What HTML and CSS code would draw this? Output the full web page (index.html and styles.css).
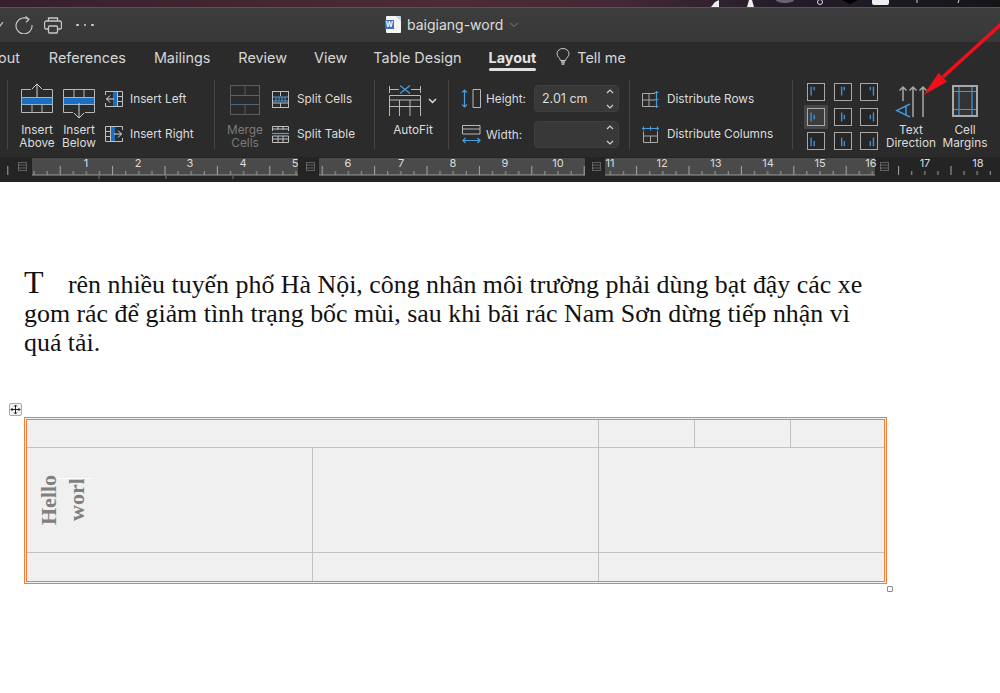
FILE: index.html
```html
<!DOCTYPE html>
<html lang="en">
<head>
    <meta charset="UTF-8">
    <meta name="viewport" content="width=device-width, initial-scale=1.0">
    <title>baigiang-word</title>
    <link rel="stylesheet" href="styles.css">
</head>
<body>

<div class="desktop-strip">
    <svg width="1000" height="7" viewBox="0 0 1000 7">
        <path d="M711 7l4-5 4-2v7z" fill="#eee"/>
        <path d="M747 7l2-7h3l2 7z" fill="#eee"/>
        <ellipse cx="785" cy="0" rx="9" ry="3" fill="#6a6470"/>
        <circle cx="820" cy="2" r="2.5" fill="none" stroke="#ddd"/>
        <path d="M842 0h16l-8 4z" fill="#000"/>
        <rect x="872" y="-5" width="17" height="10" rx="2" fill="#eee"/>
        <path d="M917 0v3M959 0l-1 3" stroke="#ccc"/>
    </svg>
</div>

<div class="titlebar">
    <div class="quick-tools">
        <svg class="qt-chev" width="4" height="8" viewBox="0 0 4 8"><path d="M-3 2l3 3 3-4" fill="none" stroke="#ccc" stroke-width="1.2"/></svg>
        <svg width="18" height="18" viewBox="0 0 18 18"><path d="M13.5 3.2A8 8 0 1 0 17 9" fill="none" stroke="#c8c8c8" stroke-width="1.2"/><path d="M10.5 0.5l3.5 2.7-3 3.2" fill="none" stroke="#c8c8c8" stroke-width="1.2"/></svg>
        <svg width="18" height="17" viewBox="0 0 18 17"><path d="M4.5 4V1h9v3M4.5 12H2a1.500 1.500 0 0 1-1.500-1.500V6A2 2 0 0 1 2.500 4h13a2 2 0 0 1 2 2v4.500A1.500 1.500 0 0 1 16 12h-2.500" fill="none" stroke="#c8c8c8" stroke-width="1.300"/><rect x="4.500" y="9" width="9" height="7" rx="1" fill="none" stroke="#c8c8c8" stroke-width="1.300"/></svg>
        <div class="more-dots"><span></span><span></span><span></span></div>
    </div>
    <div class="doc-title">
        <div class="doc-icon"><span class="doc-w">W</span></div>
        <span>baigiang-word</span>
        <svg width="10" height="6" viewBox="0 0 10 6"><path d="M1 1l4 3.500L9 1" fill="none" stroke="#666" stroke-width="1.200"/></svg>
    </div>
</div>

<div class="tabs">
    <span class="tab tab-cut">out</span>
    <span class="tab">References</span>
    <span class="tab">Mailings</span>
    <span class="tab">Review</span>
    <span class="tab tab-view">View</span>
    <span class="tab tab-design">Table Design</span>
    <span class="tab tab-active">Layout</span>
    <span class="tell-me">
        <svg width="14" height="18" viewBox="0 0 14 18"><path d="M4.500 12.500C4.200 10 1 8.800 1 5.800a6 5.300 0 0 1 12 0c0 3-3.200 4.200-3.500 6.700z" fill="none" stroke="#c8c8c8" stroke-width="1"/><path d="M5 14h4M5.500 16h3" stroke="#c8c8c8" stroke-width="1.300"/></svg>
        Tell me
    </span>
</div>

<div class="ribbon">
    <div class="group group-insert">
        <div class="big-btn">
            <svg width="32" height="36" viewBox="0 0 32 36" fill="none" stroke="#b8b8b8" stroke-width="1">
                <path d="M.5 14V6.500H10M22 6.500h9.500V14M.5 22v7.500h31V22M11 22v7.500M21 22v7.500"/>
                <rect x=".5" y="14.500" width="31" height="7" fill="#1c6ec0" stroke="#9cb4cc"/>
                <path d="M16 14V.8M11 6l5-5 5 5" stroke="#d0d0d0"/>
            </svg>
            <span class="btn-label">Insert<br>Above</span>
        </div>
        <div class="big-btn">
            <svg width="32" height="36" viewBox="0 0 32 36" fill="none" stroke="#b8b8b8" stroke-width="1">
                <path d="M.5 14V6.500h31V14M11 6.500V14M21 6.500V14M.5 22v7.500H10M22 29.500h9.500V22"/>
                <rect x=".5" y="14.500" width="31" height="7" fill="#1c6ec0" stroke="#9cb4cc"/>
                <path d="M16 20v15M11 30l5 5 5-5" stroke="#d0d0d0"/>
            </svg>
            <span class="btn-label">Insert<br>Below</span>
        </div>
        <div class="row-list">
            <div class="row-btn">
                <svg width="18" height="16" viewBox="0 0 18 16" fill="none" stroke="#c0c0c0">
                    <rect x="8" y="1" width="4.500" height="14" fill="#1c6ec0" stroke="none"/>
                    <path d="M.5 4V.5h17v15H.5V12M12.500 1v14M12.500 5.500h5M12.500 10.500h5"/>
                    <path d="M9 8H1.500M5 4.500L1.500 8 5 11.500" stroke="#e0e0e0"/>
                </svg>
                <span>Insert Left</span>
            </div>
            <div class="row-btn">
                <svg width="18" height="16" viewBox="0 0 18 16" fill="none" stroke="#c0c0c0">
                    <rect x="5.500" y="1" width="4.500" height="14" fill="#1c6ec0" stroke="none"/>
                    <path d="M17.500 4V.5H.5v15h17V12M5.500 1v14M.5 5.500h5M.5 10.500h5"/>
                    <path d="M9 8h7.500M13 4.500L16.500 8 13 11.500" stroke="#e0e0e0"/>
                </svg>
                <span>Insert Right</span>
            </div>
        </div>
    </div>

    <div class="group group-merge">
        <div class="big-btn merge-btn">
            <svg width="30" height="30" viewBox="0 0 30 30" fill="none" stroke="#5c5c5c">
                <rect x=".5" y=".5" width="29" height="29"/>
                <path d="M15 1v9M15 20v9"/>
                <path d="M1 10.500h28M1 19.500h28" stroke="#4f6578"/>
            </svg>
            <span class="btn-label btn-label-off">Merge<br>Cells</span>
        </div>
        <div class="row-list">
            <div class="row-btn">
                <svg width="17" height="17" viewBox="0 0 17 17" fill="none" stroke="#c0c0c0">
                    <rect x=".5" y=".5" width="16" height="16"/>
                    <path d="M8.500 1v4M8.500 12v4M1 12h15"/>
                    <path d="M1 6h15M1 10h15M4 6v4M7 6v4M10 6v4M13 6v4" stroke="#4a9ede"/>
                </svg>
                <span>Split Cells</span>
            </div>
            <div class="row-btn">
                <svg width="17" height="17" viewBox="0 0 17 17" fill="none" stroke="#c0c0c0">
                    <path d="M.5 5V.5h16V5M1 3h15M6 1v3M11 1v3"/>
                    <path d="M0 7.500h17" stroke="#4a9ede" stroke-width="1.200"/>
                    <path d="M.5 10v6.500h16V10h-16M1 13h15M6 10v6M11 10v6"/>
                </svg>
                <span>Split Table</span>
            </div>
        </div>
    </div>

    <div class="group group-autofit">
        <div class="big-btn autofit-btn">
            <div class="autofit-icon">
                <svg width="32" height="32" viewBox="0 0 32 32" fill="none" stroke="#b8b8b8">
                    <path d="M.5 1v7M31.500 1v7M1 4.500h9M22 4.500h9"/>
                    <path d="M11 .5l10 8M21 .5l-10 8" stroke="#4a9ede" stroke-width="1.200"/>
                    <path d="M.5 31V10.500h31V31M1 15h30M.5 21.500h31M10.500 15v16M21 15v16"/>
                </svg>
                <svg class="autofit-chev" width="9" height="6" viewBox="0 0 9 6"><path d="M1 1l3.500 3.500L8 1" fill="none" stroke="#ddd" stroke-width="1.500"/></svg>
            </div>
            <span class="btn-label">AutoFit</span>
        </div>
    </div>

    <div class="group group-size">
        <div class="size-row">
            <svg width="19" height="19" viewBox="0 0 19 19" fill="none">
                <path d="M2.500 1v17M0 3.500L2.500 1 5 3.500M0 15.500L2.500 18 5 15.500" stroke="#4a9ede" stroke-width="1.200"/>
                <path d="M11 .5h7.500v18H11V.5" stroke="#b8b8b8"/>
            </svg>
            <span class="size-label">Height:</span>
            <div class="spin"><span>2.01 cm</span><svg class="spin-arrows" width="8" height="20" viewBox="0 0 8 20"><path d="M1 4l3-3 3 3M1 16l3 3 3-3" fill="none" stroke="#d0d0d0" stroke-width="1.200"/></svg></div>
        </div>
        <div class="size-row">
            <svg width="19" height="19" viewBox="0 0 19 19" fill="none">
                <path d="M.5 9V.5h17.500V9H.5M1 4h17" stroke="#b8b8b8"/>
                <path d="M1 15.500h17M3.500 13L1 15.500 3.500 18M15.500 13l2.500 2.500-2.500 2.500" stroke="#4a9ede" stroke-width="1.200"/>
            </svg>
            <span class="size-label">Width:</span>
            <div class="spin"><span></span><svg class="spin-arrows" width="8" height="20" viewBox="0 0 8 20"><path d="M1 4l3-3 3 3M1 16l3 3 3-3" fill="none" stroke="#d0d0d0" stroke-width="1.200"/></svg></div>
        </div>
    </div>

    <div class="group group-distribute">
        <div class="row-list">
            <div class="row-btn">
                <svg width="18" height="17" viewBox="0 0 18 17" fill="none" stroke="#a8a8a8">
                    <path d="M13 2.500H.5v13H13M7 3v12M1 9h12"/>
                    <path d="M14.500 0v17M12.500 1.500h4M12.500 8.500h4M12.500 15.500h4" stroke="#4a9ede" stroke-width="1.200"/>
                </svg>
                <span>Distribute Rows</span>
            </div>
            <div class="row-btn">
                <svg width="18" height="17" viewBox="0 0 18 17" fill="none" stroke="#a8a8a8">
                    <path d="M1.500 5.500v11h14v-11M1.500 10h14M8.500 10v6"/>
                    <path d="M0 2.500h17M1.500 .5v4M8.500 .5v4M15.500 .5v4" stroke="#4a9ede" stroke-width="1.200"/>
                </svg>
                <span>Distribute Columns</span>
            </div>
        </div>
    </div>

    <div class="group group-align">
        <div class="align-grid">
            <svg class="align-cell" viewBox="0 0 18 18"><path d="M3.500 3v10M7 3v4"/></svg>
            <svg class="align-cell" viewBox="0 0 18 18"><path d="M7.500 3v10M10.500 3v4"/></svg>
            <svg class="align-cell" viewBox="0 0 18 18"><path d="M10.500 3v4M14 3v10"/></svg>
            <svg class="align-cell align-on" viewBox="0 0 18 18"><path d="M3.500 4v10M7 6.500v5"/></svg>
            <svg class="align-cell" viewBox="0 0 18 18"><path d="M7.500 4v10M10.500 6.500v5"/></svg>
            <svg class="align-cell" viewBox="0 0 18 18"><path d="M10.500 6.500v5M14 4v10"/></svg>
            <svg class="align-cell" viewBox="0 0 18 18"><path d="M3.500 5v10M7 9v6"/></svg>
            <svg class="align-cell" viewBox="0 0 18 18"><path d="M7.500 5v10M10.500 9v6"/></svg>
            <svg class="align-cell" viewBox="0 0 18 18"><path d="M10.500 9v6M14 5v10"/></svg>
        </div>
        <div class="big-btn dir-btn">
            <svg width="32" height="33" viewBox="0 0 32 33" fill="none">
                <path d="M8 16V2M18 32V2M28 32V2M4.500 5.500L8 2l3.500 3.500M14.500 5.500L18 2l3.500 3.500M24.500 5.500L28 2l3.500 3.500" stroke="#a8a8a8" stroke-width="1.500"/>
                <path d="M15 19L1.500 25.500 15 32M11 21.200v8.600" stroke="#3f97dc" stroke-width="1.500"/>
            </svg>
            <span class="btn-label">Text<br>Direction</span>
        </div>
        <div class="big-btn margin-btn">
            <svg width="26" height="32" viewBox="0 0 26 32" fill="none">
                <rect x="1" y="1" width="24" height="30" fill="#333" stroke="#a8a8a8" stroke-width="2"/>
                <path d="M7 2v28M20 2v28M2 6.500h22M2 24.500h22" stroke="#3f97dc" stroke-width="1.200"/>
            </svg>
            <span class="btn-label">Cell<br>Margins</span>
        </div>
    </div>
</div>

<div class="ruler">
    <svg width="1000" height="25" viewBox="0 0 1000 25">
        <defs>
            <pattern id="ticks" width="52.4" height="25" patternUnits="userSpaceOnUse" x="7.3">
                <path d="M.5 9v9" stroke="#a6a6a6"/>
                <path d="M13.600 14v4M26.700 14v4M39.800 14v4" stroke="#a0a0a0"/>
            </pattern>
        </defs>
        <rect x="32" y="1" width="266" height="17" fill="#4a4a4a"/>
        <rect x="319" y="1" width="266" height="17" fill="#4a4a4a"/>
        <rect x="605" y="1" width="270" height="17" fill="#4a4a4a"/>
        <rect width="1000" height="18" fill="url(#ticks)"/>
        <rect x="0" y="0" width="2" height="18" fill="#242424"/>
        <rect x="15" y="1" width="17" height="17" fill="#242424"/>
        <rect x="298" y="1" width="21" height="17" fill="#242424"/>
        <rect x="585" y="1" width="20" height="17" fill="#242424"/>
        <rect x="875" y="1" width="17" height="17" fill="#242424"/>
        <path d="M32 18h266M319 18h266M605 18h270" stroke="#9a9a9a"/>
        <path d="M99 19v3M166 19v3M233 19v3" stroke="#777"/>
        <g class="ruler-grip" fill="none" stroke="#9a9a9a" stroke-dasharray="1 1">
            <rect x="18.500" y="5.500" width="8" height="8"/><path d="M18.500 8h8M18.500 11h8"/>
            <rect x="306.500" y="5.500" width="8" height="8"/><path d="M306.500 8h8M306.500 11h8"/>
            <rect x="592.500" y="5.500" width="8" height="8"/><path d="M592.500 8h8M592.500 11h8"/>
            <rect x="880.500" y="5.500" width="8" height="8"/><path d="M880.500 8h8M880.500 11h8"/>
        </g>
        <g class="ruler-num">
            <text x="86" y="10">1</text><text x="138" y="10">2</text><text x="190" y="10">3</text>
            <text x="243" y="10">4</text><text x="295" y="10">5</text><text x="348" y="10">6</text>
            <text x="401" y="10">7</text><text x="453" y="10">8</text><text x="505" y="10">9</text>
            <text x="558" y="10">10</text><text x="610" y="10">11</text><text x="662" y="10">12</text>
            <text x="716" y="10">13</text><text x="768" y="10">14</text><text x="820" y="10">15</text>
            <text x="871" y="10">16</text><text x="925" y="10">17</text><text x="978" y="10">18</text>
        </g>
    </svg>
</div>

<div class="doc">
    <p class="doc-text"><span class="big-t">T</span>rên nhiều tuyến phố Hà Nội, công nhân môi trường phải dùng bạt đậy các xe gom rác để giảm tình trạng bốc mùi, sau khi bãi rác Nam Sơn dừng tiếp nhận vì quá tải.</p>

    <div class="table-wrap">
        <div class="move-handle">
            <svg width="11" height="11" viewBox="0 0 11 11" fill="none" stroke="#222"><path d="M5.500 1v9M1 5.500h9M4 2.500L5.500 1 7 2.500M4 8.500L5.500 10 7 8.500M2.500 4L1 5.500 2.500 7M8.500 4L10 5.500 8.500 7"/></svg>
        </div>
        <table class="word-table">
            <colgroup>
                <col class="col-a"><col class="col-a"><col class="col-b"><col class="col-b"><col>
            </colgroup>
            <tr class="row-thin">
                <td colspan="2"></td><td></td><td></td><td></td>
            </tr>
            <tr class="row-tall">
                <td class="vert-cell"><div class="vert-text">Hello<br><span class="vert-sel">worl</span></div></td>
                <td></td>
                <td colspan="3"></td>
            </tr>
            <tr class="row-thin">
                <td></td><td></td><td colspan="3"></td>
            </tr>
        </table>
        <div class="resize-handle"></div>
    </div>
</div>

<svg class="red-arrow" width="78" height="100" viewBox="0 0 78 100">
    <path d="M80 7.200L21 61" stroke="#f10f1c" stroke-width="3.500" fill="none"/>
    <path d="M1.700 79L16.700 56.700 25 65.700z" fill="#f10f1c"/>
</svg>

</body>
</html>
```

FILE: styles.css
```css
* { box-sizing: border-box; }

body {
    margin: 0;
    width: 1000px;
    height: 693px;
    overflow: hidden;
    background: #fff;
    font-family: Inter, "Liberation Sans", sans-serif;
    color: #dcdcdc;
    position: relative;
}

svg { display: block; flex: none; }

.desktop-strip {
    height: 7px;
    background: linear-gradient(90deg, #35202c 0%, #4d2b36 45%, #432835 62%, #241c2a 78%, #151518 100%);
    overflow: hidden;
}

.titlebar {
    height: 35px;
    background: linear-gradient(#3d3d3d, #383838);
    border-top: 1px solid #565656;
    display: flex;
    align-items: center;
    position: relative;
}
.quick-tools {
    display: flex;
    align-items: center;
    gap: 11px;
}
.more-dots { display: flex; gap: 5px; margin-left: 3px; }
.more-dots span { width: 2.500px; height: 2.500px; border-radius: 50%; background: #d0d0d0; }

.doc-title {
    position: absolute;
    left: 386px;
    top: 8px;
    display: flex;
    align-items: center;
    gap: 6px;
    font-size: 14px;
    color: #dedede;
}
.doc-icon {
    width: 15px;
    height: 17px;
    background: linear-gradient(225deg, #cfd6e4 4px, #f6f6f6 4px);
    border-radius: 1px;
    position: relative;
}
.doc-w {
    position: absolute;
    left: -1px;
    top: 4px;
    width: 9px;
    height: 9px;
    background: #3d6fc0;
    color: #fff;
    font-size: 7px;
    line-height: 9px;
    text-align: center;
    font-weight: 700;
}

.tabs {
    height: 34px;
    background: #2b2b2b;
    display: flex;
    align-items: center;
    gap: 28px;
    font-size: 14.400px;
    padding-bottom: 4px;
    position: relative;
}
.tab { white-space: nowrap; color: #d6d6d6; }
.tab-cut { margin: 0 1px 0 -2px; }
.tab-view { margin-left: -1px; }
.tab-design { margin-left: -2px; }
.tab-active { font-weight: 700; color: #e4e4e4; position: relative; margin-left: -1px; }
.tab-active::after {
    content: "";
    position: absolute;
    left: 0;
    right: 0;
    bottom: -5px;
    height: 3px;
    border-radius: 2px;
    background: #e0e0e0;
}
.tell-me { display: flex; align-items: center; gap: 7px; margin-left: -8px; color: #d6d6d6; }

.ribbon {
    height: 81px;
    background: #2b2b2b;
    display: flex;
    padding-left: 7px;
}
.group {
    border-left: 1px solid #464646;
    height: 69px;
    margin-top: 4px;
    display: flex;
    align-items: flex-start;
    font-size: 11.800px;
}
.big-btn { display: flex; flex-direction: column; align-items: center; width: 32px; }
.btn-label {
    margin-top: 5px;
    line-height: 13px;
    text-align: center;
    white-space: nowrap;
    color: #dcdcdc;
}
.btn-label-off { color: #7a7a7a; margin-top: 9px; }

.row-list { display: flex; flex-direction: column; gap: 13px; margin-top: 8px; }
.row-btn { display: flex; align-items: center; gap: 7px; height: 22px; white-space: nowrap; }

.group-insert { width: 207px; padding-left: 13px; gap: 10px; }
.group-insert .big-btn { margin-top: 3px; }
.group-merge { width: 160px; padding-left: 15px; gap: 12px; }
.group-merge .row-btn { gap: 8px; }
.merge-btn { width: 30px; margin-top: 5px; }
.group-autofit { width: 74px; padding-left: 14px; }
.autofit-btn { width: 48px; margin-top: 5px; }
.autofit-icon { display: flex; align-items: center; gap: 7px; }
.autofit-btn .btn-label { margin-top: 7px; }

.group-size {
    width: 181px;
    padding: 5px 0 0 13px;
    flex-direction: column;
    gap: 9px;
}
.size-row { display: flex; align-items: center; height: 27px; }
.size-label { width: 48px; margin-left: 5px; }
.spin {
    width: 85px;
    height: 27px;
    background: #383838;
    border: 1px solid #3f3f3f;
    border-radius: 4px;
    display: flex;
    align-items: center;
    justify-content: space-between;
    padding: 0 4px 0 7px;
    font-size: 12.500px;
}

.group-distribute { width: 163px; padding-left: 12px; }

.group-align { padding-left: 14px; flex: 1; }
.align-grid {
    display: grid;
    grid-template-columns: repeat(3, 18px);
    grid-template-rows: repeat(3, 18px);
    gap: 6.500px 8.500px;
    margin-top: 3px;
}
.align-cell {
    width: 18px;
    height: 18px;
    background: #262626;
    border: 1.500px solid #a8a8a8;
    fill: none;
    stroke: #3f8fd0;
    stroke-width: 1.600;
}
.align-on { outline: 3px solid #454545; background: #3d3d3d; }

.dir-btn { width: 54px; margin: 5px 0 0 6px; }
.dir-btn .btn-label { margin-top: 6px; }
.margin-btn { width: 44px; margin: 5px 0 0 5px; }
.margin-btn .btn-label { margin-top: 7px; }

.ruler { height: 25px; background: #242424; }
.ruler-num text {
    fill: #dcdcdc;
    font-size: 11px;
    text-anchor: middle;
}

.doc { padding: 86px 0 0 24px; position: relative; }
.doc-text {
    margin: 0;
    width: 850px;
    font-family: "Liberation Serif", "Times New Roman", serif;
    font-size: 25.900px;
    line-height: 29px;
    color: #111;
}
.big-t { display: inline-block; width: 44px; font-size: 32px; line-height: 29px; }

.table-wrap { margin-top: 60px; width: 863px; position: relative; }
.word-table {
    width: 863px;
    height: 165px;
    table-layout: fixed;
    border-collapse: separate;
    border-spacing: 0;
    border: 3px double #f37f3c;
    background: #f0f0f0;
}
.col-a { width: 286px; }
.col-b { width: 96px; }
.word-table td { border-right: 1px solid #c2c2c2; border-bottom: 1px solid #c2c2c2; padding: 0; }
.word-table tr td:last-child { border-right: 0; }
.word-table tr:last-child td { border-bottom: 0; }
.row-thin { height: 28px; }
.vert-cell { padding: 0; vertical-align: top; }
.vert-text {
    writing-mode: vertical-rl;
    transform: rotate(180deg);
    height: 104px;
    width: 60px;
    margin-left: 8px;
    text-align: center;
    font-family: "Liberation Serif", serif;
    font-weight: 700;
    font-size: 22px;
    line-height: 28px;
    color: #808080;
}
.vert-sel { position: relative; }
.vert-sel::after {
    content: "";
    position: absolute;
    left: -2px;
    right: -6px;
    bottom: -1px;
    height: 1px;
    background: #fff;
}
.move-handle {
    position: absolute;
    left: -15px;
    top: -14px;
    width: 13px;
    height: 13px;
    border: 1px solid #a8a8a8;
    border-radius: 2px;
    background: #f5f5f5;
    display: flex;
    align-items: center;
    justify-content: center;
}
.resize-handle {
    position: absolute;
    left: 863px;
    bottom: -8px;
    width: 6px;
    height: 6px;
    border: 1px solid #8a8a8a;
    border-radius: 1px;
    background: #fff;
}

.red-arrow { position: absolute; left: 922px; top: 16px; }
```
